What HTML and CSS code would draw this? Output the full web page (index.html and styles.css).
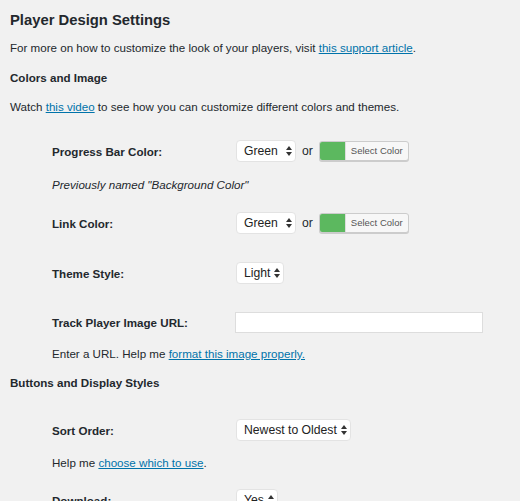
FILE: index.html
```html
<!DOCTYPE html>
<html>
<head>
<meta charset="utf-8">
<link rel="stylesheet" href="styles.css">
</head>
<body>
<div class="page">
  <h2 class="title">Player Design Settings</h2>
  <p class="text intro">For more on how to customize the look of your players, visit <a href="#">this support article</a>.</p>
  <h3 class="section s1">Colors and Image</h3>
  <p class="text watch">Watch <a href="#">this video</a> to see how you can customize different colors and themes.</p>

  <div class="form">
    <div class="row r-progress">
      <div class="label">Progress Bar Color:</div>
      <div class="control">
        <span class="select sel-green">Green<svg class="arrows" viewBox="0 0 6 10" width="6" height="10"><path d="M3 0L6 4H0Z M3 10L0 6H6Z" fill="#333"/></svg></span>
        <span class="or">or</span>
        <span class="colorbtn"><span class="swatch"></span><span class="cbtext">Select Color</span></span>
      </div>
    </div>
    <p class="desc d-prev"><em>Previously named "Background Color"</em></p>

    <div class="row r-link">
      <div class="label">Link Color:</div>
      <div class="control">
        <span class="select sel-green">Green<svg class="arrows" viewBox="0 0 6 10" width="6" height="10"><path d="M3 0L6 4H0Z M3 10L0 6H6Z" fill="#333"/></svg></span>
        <span class="or">or</span>
        <span class="colorbtn"><span class="swatch"></span><span class="cbtext">Select Color</span></span>
      </div>
    </div>

    <div class="row r-theme">
      <div class="label">Theme Style:</div>
      <div class="control">
        <span class="select">Light<svg class="arrows" viewBox="0 0 6 10" width="6" height="10"><path d="M3 0L6 4H0Z M3 10L0 6H6Z" fill="#333"/></svg></span>
      </div>
    </div>

    <div class="row r-track">
      <div class="label">Track Player Image URL:</div>
      <div class="control">
        <span class="input"></span>
      </div>
    </div>
    <p class="desc d-url">Enter a URL. Help me <a href="#">format this image properly.</a></p>
  </div>

  <h3 class="section s2">Buttons and Display Styles</h3>

  <div class="form">
    <div class="row r-sort">
      <div class="label">Sort Order:</div>
      <div class="control">
        <span class="select">Newest to Oldest<svg class="arrows" viewBox="0 0 6 10" width="6" height="10"><path d="M3 0L6 4H0Z M3 10L0 6H6Z" fill="#333"/></svg></span>
      </div>
    </div>
    <p class="desc d-help">Help me <a href="#">choose which to use</a>.</p>

    <div class="row r-download">
      <div class="label">Download:</div>
      <div class="control">
        <span class="select">Yes<svg class="arrows" viewBox="0 0 6 10" width="6" height="10"><path d="M3 0L6 4H0Z M3 10L0 6H6Z" fill="#333"/></svg></span>
      </div>
    </div>
  </div>
</div>
</body>
</html>
```

FILE: styles.css
```css
html, body {
  margin: 0;
  padding: 0;
  background: #f1f1f1;
}
body {
  font-family: "Liberation Sans", Arial, sans-serif;
  font-size: 11.6px;
  color: #23282d;
  overflow: hidden;
}
.page {
  padding: 0 10px;
}
a {
  color: #0073aa;
  text-decoration: underline;
}
.title {
  margin: 9px 0 0;
  font-size: 14.8px;
  line-height: 22px;
  font-weight: 700;
}
.text {
  margin: 0;
  line-height: 20px;
}
.intro { margin-top: 7px; }
.section {
  margin: 0;
  font-size: 11.6px;
  line-height: 20px;
  font-weight: 700;
}
.s1 { margin-top: 10px; }
.watch { margin-top: 9px; }

.form {
  padding-left: 42px;
}
.row {
  display: flex;
  align-items: center;
  height: 24px;
}
.label {
  width: 184px;
  font-weight: 700;
}
.control {
  display: flex;
  align-items: center;
}
.desc {
  margin: 0;
  line-height: 20px;
}
.r-progress { margin-top: 22px; }
.d-prev { margin-top: 12px; }
.r-link { margin-top: 16px; }
.r-theme { margin-top: 26px; }
.r-track { margin-top: 25px; }
.d-url { margin-top: 10px; }
.s2 { margin-top: 9px; }
.r-sort { margin-top: 25px; }
.d-help { margin-top: 11px; }
.r-download { margin-top: 15px; }

.select {
  display: inline-flex;
  align-items: center;
  height: 22px;
  box-sizing: border-box;
  padding: 0 3px 0 7px;
  background: #fff;
  border: 1px solid #e3e3e3;
  border-radius: 4px;
  font-size: 12.2px;
  color: #222;
}
.sel-green {
  width: 60px;
  justify-content: space-between;
}
.arrows {
  margin-left: 4px;
}
.or {
  margin: 0 6px;
  font-size: 12.2px;
}
.colorbtn {
  display: inline-flex;
  height: 20px;
  box-sizing: border-box;
  border: 1px solid #ccc;
  border-radius: 3px;
  overflow: hidden;
  background: #f7f7f7;
  box-shadow: 0 1px 0 #ccc;
}
.swatch {
  width: 25px;
  background: #5cb85f;
  border-right: 1px solid #ddd;
}
.cbtext {
  padding: 0 5px 0 5px;
  font-size: 9.5px;
  line-height: 18px;
  color: #555;
}
.input {
  display: block;
  width: 248px;
  height: 21px;
  box-sizing: border-box;
  background: #fff;
  border: 1px solid #ddd;
  margin-left: -1px;
}
```
